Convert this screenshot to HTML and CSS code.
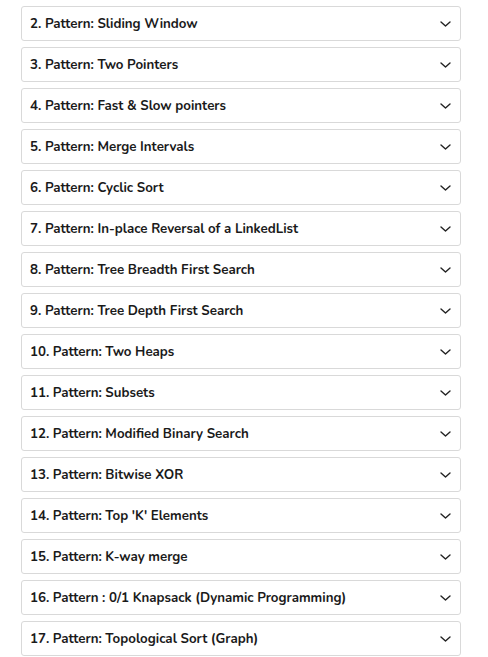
FILE: index.html
```
<!DOCTYPE html>
<html>
<head>
<meta charset="utf-8">
<link rel="stylesheet" href="styles.css">
</head>
<body>
<div class="list">
  <div class="item"><span class="title">2. Pattern: Sliding Window</span><svg class="chev" viewBox="0 0 11 6"><path d="M1 1l4.5 4 4.5-4"/></svg></div>
  <div class="item"><span class="title">3. Pattern: Two Pointers</span><svg class="chev" viewBox="0 0 11 6"><path d="M1 1l4.5 4 4.5-4"/></svg></div>
  <div class="item"><span class="title">4. Pattern: Fast &amp; Slow pointers</span><svg class="chev" viewBox="0 0 11 6"><path d="M1 1l4.5 4 4.5-4"/></svg></div>
  <div class="item"><span class="title">5. Pattern: Merge Intervals</span><svg class="chev" viewBox="0 0 11 6"><path d="M1 1l4.5 4 4.5-4"/></svg></div>
  <div class="item"><span class="title">6. Pattern: Cyclic Sort</span><svg class="chev" viewBox="0 0 11 6"><path d="M1 1l4.5 4 4.5-4"/></svg></div>
  <div class="item"><span class="title">7. Pattern: In-place Reversal of a LinkedList</span><svg class="chev" viewBox="0 0 11 6"><path d="M1 1l4.5 4 4.5-4"/></svg></div>
  <div class="item"><span class="title">8. Pattern: Tree Breadth First Search</span><svg class="chev" viewBox="0 0 11 6"><path d="M1 1l4.5 4 4.5-4"/></svg></div>
  <div class="item"><span class="title">9. Pattern: Tree Depth First Search</span><svg class="chev" viewBox="0 0 11 6"><path d="M1 1l4.5 4 4.5-4"/></svg></div>
  <div class="item"><span class="title">10. Pattern: Two Heaps</span><svg class="chev" viewBox="0 0 11 6"><path d="M1 1l4.5 4 4.5-4"/></svg></div>
  <div class="item"><span class="title">11. Pattern: Subsets</span><svg class="chev" viewBox="0 0 11 6"><path d="M1 1l4.5 4 4.5-4"/></svg></div>
  <div class="item"><span class="title">12. Pattern: Modified Binary Search</span><svg class="chev" viewBox="0 0 11 6"><path d="M1 1l4.5 4 4.5-4"/></svg></div>
  <div class="item"><span class="title">13. Pattern: Bitwise XOR</span><svg class="chev" viewBox="0 0 11 6"><path d="M1 1l4.5 4 4.5-4"/></svg></div>
  <div class="item"><span class="title">14. Pattern: Top 'K' Elements</span><svg class="chev" viewBox="0 0 11 6"><path d="M1 1l4.5 4 4.5-4"/></svg></div>
  <div class="item"><span class="title">15. Pattern: K-way merge</span><svg class="chev" viewBox="0 0 11 6"><path d="M1 1l4.5 4 4.5-4"/></svg></div>
  <div class="item"><span class="title">16. Pattern : 0/1 Knapsack (Dynamic Programming)</span><svg class="chev" viewBox="0 0 11 6"><path d="M1 1l4.5 4 4.5-4"/></svg></div>
  <div class="item"><span class="title">17. Pattern: Topological Sort (Graph)</span><svg class="chev" viewBox="0 0 11 6"><path d="M1 1l4.5 4 4.5-4"/></svg></div>
</div>
</body>
</html>
```
FILE: styles.css
```
html, body {
  margin: 0;
  padding: 0;
  background: #fff;
}
body {
  font-family: "Nunito", Lato, "Open Sans", sans-serif;
}
.list {
  display: flex;
  flex-direction: column;
  gap: 6px;
  width: 440px;
  margin: 6px 0 0 21px;
}
.item {
  box-sizing: border-box;
  height: 35px;
  border: 1px solid #d9d9d9;
  border-radius: 3px;
  display: flex;
  align-items: center;
  justify-content: space-between;
  padding: 0 9px 0 8px;
}
.title {
  font-size: 13.3px;
  font-weight: 700;
  color: #1a1a1a;
}
.chev {
  width: 11px;
  height: 6px;
  fill: none;
  stroke: #222;
  stroke-width: 1.4;
  stroke-linecap: round;
  stroke-linejoin: round;
}
```
